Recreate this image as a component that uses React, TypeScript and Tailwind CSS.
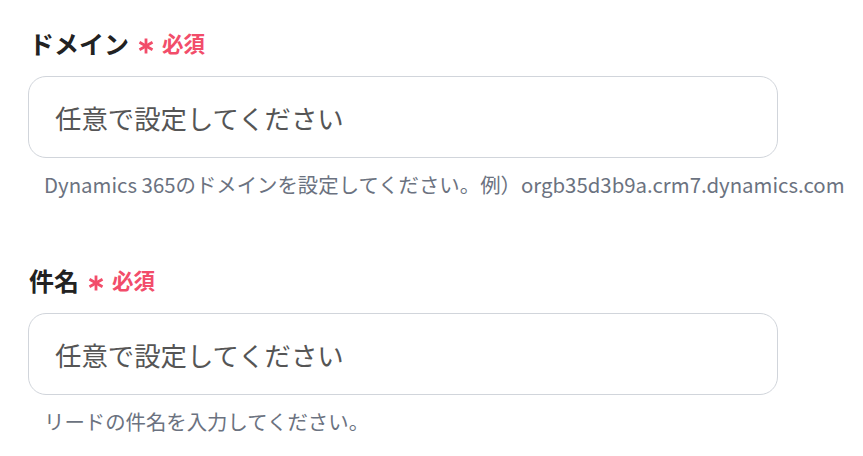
import React from "react";

type FieldProps = {
  label: string;
  help: string;
};

const Asterisk = () => (
  <svg width="16" height="16" viewBox="0 0 16 16" className="mt-[6px]">
    <g stroke="#f24d6a" strokeWidth="2.8" strokeLinecap="butt">
      <line x1="8" y1="0.5" x2="8" y2="15.5" />
      <line x1="1.5" y1="4.25" x2="14.5" y2="11.75" />
      <line x1="1.5" y1="11.75" x2="14.5" y2="4.25" />
    </g>
  </svg>
);

const Field = ({ label, help }: FieldProps) => {
  return (
    <div className="flex flex-col">
      <div className="flex items-center h-[32px] pl-[1px]">
        <span className="text-[25px] font-bold text-[#222222] leading-none">{label}</span>
        <span className="ml-[9px]">
          <Asterisk />
        </span>
        <span className="ml-[8px] text-[21.5px] font-bold text-[#f24d6a] leading-none">必須</span>
      </div>
      <input
        type="text"
        placeholder="任意で設定してください"
        className="mt-[17px] w-[750px] h-[82px] rounded-[18px] border border-[#d1d5db] bg-white px-[26px] text-[26.4px] text-[#333333] placeholder:text-[#555555] outline-none"
      />
      <div className="mt-[12px] pl-[16px] h-[28px] flex items-center text-[20.4px] text-[#6b7280] whitespace-nowrap">
        {help}
      </div>
    </div>
  );
};

export default function App() {
  return (
    <div
      className="w-[863px] h-[456px] bg-white pl-[28px] pt-[27px] flex flex-col gap-[66px] overflow-hidden"
      style={{ fontFamily: '"Noto Sans CJK JP", "Noto Sans", sans-serif' }}
    >
      <Field
        label="ドメイン"
        help="Dynamics 365のドメインを設定してください。例）orgb35d3b9a.crm7.dynamics.com"
      />
      <Field label="件名" help="リードの件名を入力してください。" />
    </div>
  );
}
